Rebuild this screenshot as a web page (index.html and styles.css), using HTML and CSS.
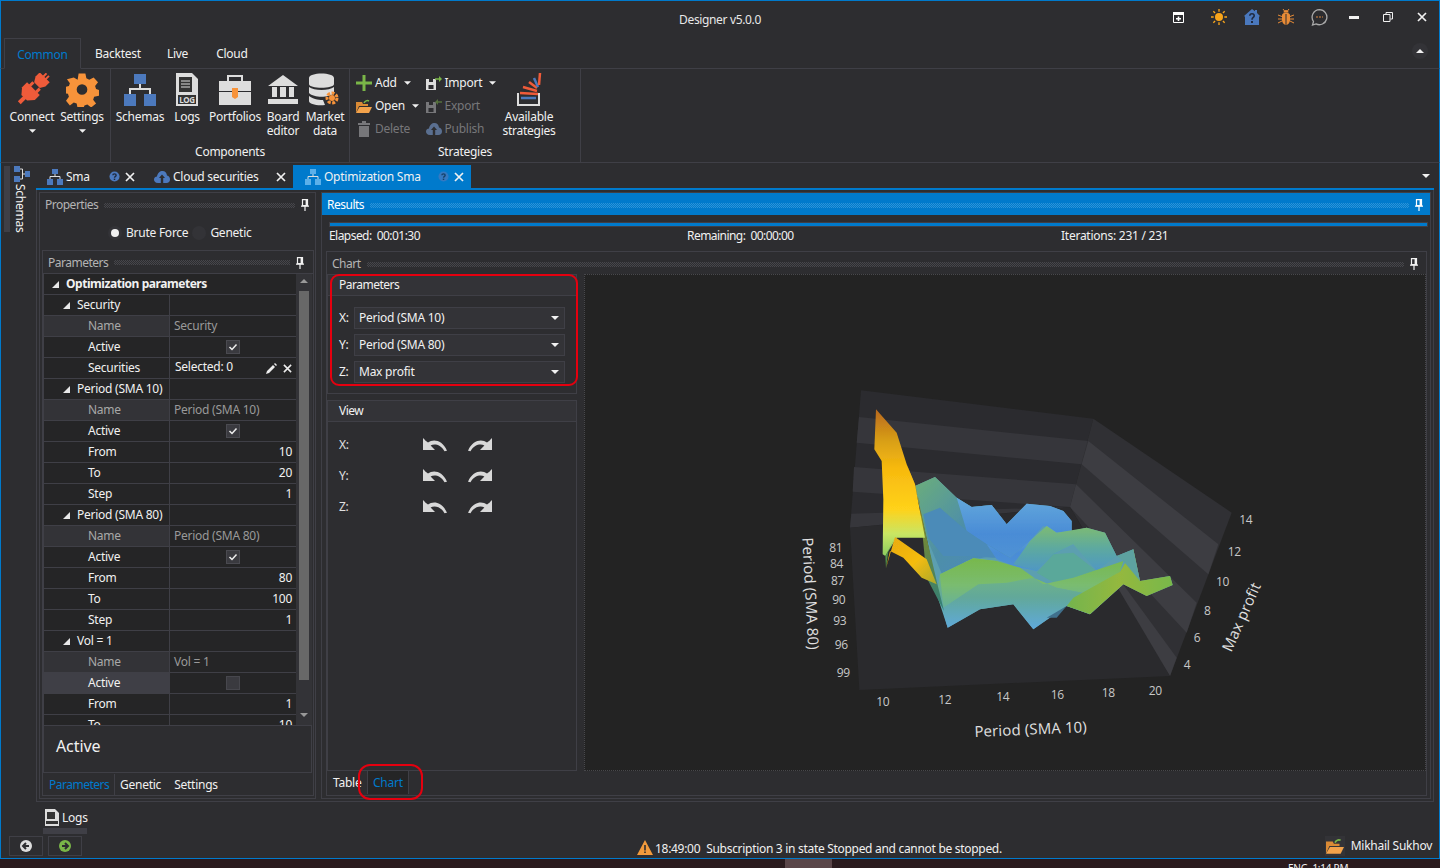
FILE: index.html
```html
<!DOCTYPE html>
<html lang="en">
<head>
<meta charset="utf-8">
<title>Designer v5.0.0</title>
<link rel="stylesheet" href="styles.css">
</head>
<body>
<svg class="defs" width="0" height="0" aria-hidden="true">
  <symbol id="schema" viewBox="0 0 16 16"><path fill="currentColor" d="M5 0h6v5H5zM0 10h6v6H0zM10 10h6v6h-6z"/><path fill="none" stroke="#ddd" d="M8 5v2.500M3 10V7.500h10V10"/></symbol>
  <symbol id="close" viewBox="0 0 10 10"><path stroke="currentColor" stroke-width="1.700" d="M1 1l8 8M9 1l-8 8"/></symbol>
  <symbol id="pin" viewBox="0 0 8 12"><path fill="none" stroke="currentColor" stroke-width="1.200" d="M1.500 .6h5v6h-5z"/><path fill="currentColor" d="M0 6.500h8v1.200H0zM3.400 7.500h1.200V12H3.400zM4.600 1h1.500v5.500H4.600z"/></symbol>
  <symbol id="help" viewBox="0 0 12 12"><circle cx="6" cy="6" r="5.500" fill="#4c79bd"/><path fill="none" stroke="#1f2a40" stroke-width="1.500" d="M4.200 4.600C4.200 2.600 7.800 2.600 7.800 4.600 7.800 5.900 6 5.800 6 7.400"/><path fill="#1f2a40" d="M5.200 8.300h1.600v1.500H5.200z"/></symbol>
  <symbol id="ccw" viewBox="0 0 24 14"><path fill="currentColor" d="M0 0l2 2 0 .2 3 2.400C10 1 19 1.500 24 12.800l-2.500 .4C17.500 6 11 5.500 7.600 7.500L12 12H0z"/></symbol>
  <symbol id="check" viewBox="0 0 14 14"><rect x=".5" y=".5" width="13" height="13" fill="#3a3a3f" stroke="#4a4a50"/><path fill="none" stroke="#eee" stroke-width="1.500" d="M3.500 7l2.500 2.500 4.500-5"/></symbol>
  <symbol id="cloud" viewBox="0 0 16 12"><path fill="currentColor" d="M4 12C1 12 0 10 0 8.500 0 6.500 1.500 5.500 3 5.500 3.500 2 6 0 8.500 0 11 0 12.800 2 13 4.500 15 5 16 6.500 16 8.500 16 10.500 14.500 12 12.500 12z"/><path fill="#2d2d30" d="M8 3.500l3 3.500H9.200v5H6.800V7H5z"/></symbol>
  <symbol id="tri" viewBox="0 0 8 4"><path fill="currentColor" d="M0 0h8L4 4z"/></symbol>
  <symbol id="triup" viewBox="0 0 8 4"><path fill="currentColor" d="M0 4h8L4 0z"/></symbol>
  <symbol id="tree" viewBox="0 0 7 7"><path fill="#e8e8e8" d="M7 0v7H0z"/></symbol>
</svg>

<div class="app">
  <header class="titlebar">
    <div class="title">Designer v5.0.0</div>
    <div class="winicons">
      <svg class="wi wi-first" width="11" height="11" viewBox="0 0 11 11"><path fill="none" stroke="#fff" d="M.5 .5h10v10H.5z"/><path fill="#fff" d="M0 0h11v3H0zM3 6h5v1.500H3z"/><path fill="#fff" d="M4.700 4.500h1.600v4.500H4.700z"/></svg>
      <svg class="wi wi-sun" width="16" height="16" viewBox="0 0 18 18"><circle cx="9" cy="9" r="4.500" fill="#f9a51a"/><path stroke="#f9a51a" stroke-width="1.500" d="M9 0v3M9 15v3M0 9h3M15 9h3M2.600 2.600l2 2M13.400 13.400l2 2M15.400 2.600l-2 2M4.600 13.400l-2 2"/></svg>
      <svg class="wi wi-home" width="16" height="16" viewBox="0 0 16 16"><path fill="#4a78bd" d="M8 0l3 2.300V1h2v3l3 3-1 .7V16H1V7.700L0 7z"/><path fill="none" stroke="#1f2a40" stroke-width="1.600" d="M5.800 6.800C5.800 4 10.200 4 10.200 6.800 10.200 8.600 8 8.400 8 10.800"/><path fill="#1f2a40" d="M7 12h2v2H7z"/></svg>
      <svg class="wi wi-bug" width="16" height="16" viewBox="0 0 16 16"><path fill="#e88b36" d="M4 6c0-1 1.500-2.500 4-2.500S12 5 12 6v5c0 2.500-2 5-4 5s-4-2.500-4-5z"/><path fill="#e88b36" d="M5.500 3.500a2.500 2.500 0 0 1 5 0z"/><path stroke="#e88b36" d="M5 0l1.500 2M11 0L9.500 2M0 6l4 1.500M16 6l-4 1.500M0 10h4M16 10h-4M0 14l4-2M16 14l-4-2"/><path stroke="#2d2d30" d="M8 5v11"/></svg>
      <svg class="wi wi-chat" width="17" height="17" viewBox="0 0 17 17"><path fill="none" stroke="#aaa" stroke-width="1.300" d="M8.500 .7a7.500 7.500 0 1 1-3.500 14.200L1.500 16l1-3.500A7.500 7.500 0 0 1 8.500 .7z"/><path stroke="#a0683a" stroke-width="1.500" stroke-dasharray="2 1" d="M5 8h7"/></svg>
      <svg class="wi wi-min" width="10" height="3" viewBox="0 0 10 3"><path fill="#f1f1f1" d="M0 0h10v3H0z"/></svg>
      <svg class="wi wi-max" width="10" height="10" viewBox="0 0 10 10"><path fill="none" stroke="#f1f1f1" d="M3 2.500V.5h6.500V7H7.500M.5 2.500H7V9.500H.5z"/></svg>
      <svg class="wi wi-x" width="10" height="10"><use href="#close"/></svg>
    </div>
  </header>

  <nav class="ribbon-tabs">
    <div class="rtab rtab-active">Common</div>
    <div class="rtab rtab-backtest">Backtest</div>
    <div class="rtab rtab-live">Live</div>
    <div class="rtab rtab-cloud">Cloud</div>
    <div class="collapse"><svg width="8" height="4"><use href="#triup"/></svg></div>
  </nav>

  <section class="ribbon">
    <div class="group group-a">
      <div class="btns">
        <div class="rb rb-connect">
          <svg class="big" width="36" height="34" viewBox="0 0 36 34"><g fill="#ef5b3a" transform="rotate(45 18 17)"><path d="M11 -1h14v6l-3 5h-8l-3-5z"/><path d="M15.500 -5h2v5h-2zM19 -5h2v5h-2z"/><path d="M9 15h18v7l-5 6h-8l-5-6z"/><path d="M12 10.500h3v5h-3zM21 10.500h3v5h-3z"/><path d="M16 27h4v8h-4z"/></g></svg>
          <span>Connect</span><svg class="drop" width="7" height="4"><use href="#tri"/></svg>
        </div>
        <div class="rb rb-settings">
          <svg class="big" width="33" height="33" viewBox="0 0 33 33"><path fill="#f7933a" fill-rule="evenodd" d="M13 0h7l1 5 3 1.500L28.500 4 33 9l-3 4 1 3 3 1v6l-5 1-1 3 3 4-5 4-4-3-3 1-1 3h-6l-1-5-3-1-4 3-4-5 3-4-1-3-4-1v-6l5-1 1-3-3-4L8 4l4 2.500zM16.500 11a5.500 5.500 0 1 0 0 11 5.500 5.500 0 0 0 0-11z" transform="scale(.97)"/></svg>
          <span>Settings</span><svg class="drop" width="7" height="4"><use href="#tri"/></svg>
        </div>
      </div>
    </div>
    <div class="group group-b">
      <div class="btns">
        <div class="rb rb-schemas"><svg class="big schema-c" width="32" height="34"><use href="#schema"/></svg><span>Schemas</span></div>
        <div class="rb rb-logs">
          <svg class="big" width="24" height="34" viewBox="0 0 24 34"><path fill="#ddd" d="M1 0h16l6 6v27H1z"/><path fill="#333" d="M4 4h13v15H4zM3 22h18v9H3z"/><path stroke="#ddd" d="M6 8h9M6 11h9M6 14h9"/><text x="12" y="30" class="log-t">LOG</text></svg>
          <span>Logs</span>
        </div>
        <div class="rb rb-portfolios">
          <svg class="big" width="34" height="32" viewBox="0 0 34 32"><path fill="none" stroke="#ddd" stroke-width="2" d="M10 7V2h14v5"/><path fill="#ddd" d="M1 7h32v10H1zM1 18h32v13H1z"/><path fill="#f7933a" d="M14 14h6v9l-3 2-3-2z"/></svg>
          <span>Portfolios</span>
        </div>
        <div class="rb rb-board">
          <svg class="big" width="32" height="32" viewBox="0 0 32 32"><path fill="#ddd" d="M16 1l15 11H1zM5 13h5v10H5zM13 13h6v10h-6zM22 13h5v10h-5zM1 25h30v5H1z"/></svg>
          <span>Board<br>editor</span>
        </div>
        <div class="rb rb-market">
          <svg class="big" width="32" height="34" viewBox="0 0 32 34"><path fill="#ddd" d="M0 5c0-6 25-6 25 0v6c0 5-25 5-25 0zM0 14c5 4 20 4 25 0v6c-5 5-20 5-25 0zM0 23c5 4 12 4 14 4l2 5C8 33 0 31 0 28z"/><circle cx="23" cy="25" r="5" fill="none" stroke="#f7933a" stroke-width="3" stroke-dasharray="3 1.500"/><circle cx="23" cy="25" r="3" fill="#f7933a"/></svg>
          <span>Market<br>data</span>
        </div>
      </div>
      <div class="gname">Components</div>
    </div>
    <div class="group group-c">
      <div class="btns">
        <div class="smallcols">
          <div class="smallcol">
            <div class="sb"><svg width="16" height="16" viewBox="0 0 16 16"><path fill="#7ab648" d="M6.500 0h3v6.500H16v3H9.500V16h-3V9.500H0v-3h6.500z"/></svg><span>Add</span><svg class="tri" width="7" height="4"><use href="#tri"/></svg></div>
            <div class="sb"><svg width="16" height="15" viewBox="0 0 16 15"><path fill="#d98a35" d="M0 3h6l1 2h5v2H3L0 14z"/><path fill="#f2a24b" d="M3.500 8H16l-3 6H0z"/><path fill="none" stroke="#7ab648" stroke-width="1.500" d="M8 4c1-2 3-3 5-2"/></svg><span>Open</span><svg class="tri" width="7" height="4"><use href="#tri"/></svg></div>
            <div class="sb sb-off"><svg width="16" height="16" viewBox="0 0 16 16"><path fill="#77777a" d="M2 2h12v2H2zM6 0h4v2H6zM3 5h10v11H3z"/></svg><span>Delete</span></div>
          </div>
          <div class="smallcol">
            <div class="sb"><svg width="16" height="14" viewBox="0 0 16 14"><path fill="#ddd" d="M0 3h10v11H0z"/><path fill="#2d2d30" d="M3 3h4v3H3zM2.500 9h5v4h-5z"/><path stroke="#7ab648" stroke-width="1.500" d="M9 3h5"/><path fill="#7ab648" d="M13 0l3 3-3 3z"/></svg><span>Import</span><svg class="tri" width="7" height="4"><use href="#tri"/></svg></div>
            <div class="sb sb-off"><svg width="16" height="14" viewBox="0 0 16 14"><path fill="#77777a" d="M0 3h10v11H0z"/><path fill="#2d2d30" d="M3 3h4v3H3zM2.500 9h5v4h-5z"/><path stroke="#55703c" stroke-width="1.500" d="M11 3h5"/><path fill="#55703c" d="M12 0L9 3l3 3z"/></svg><span>Export</span></div>
            <div class="sb sb-off"><svg class="pub" width="16" height="12"><use href="#cloud"/></svg><span>Publish</span></div>
          </div>
        </div>
        <div class="rb rb-avail">
          <svg class="big" width="26" height="34" viewBox="0 0 26 34"><path fill="none" stroke="#ddd" stroke-width="2" d="M2 20v12h21V20"/><path stroke="#ef5b3a" stroke-width="2.500" d="M4 20l18 1"/><path stroke="#4c79bd" stroke-width="2.500" d="M5 25h15"/><path stroke="#ef5b3a" stroke-width="2.500" d="M7 14l14 4M13 9l8 6"/><path stroke="#4c79bd" stroke-width="2.500" d="M18 5l4 9"/><path stroke="#ef5b3a" stroke-width="2.500" d="M24 0l-1 12"/></svg>
          <span>Available<br>strategies</span>
        </div>
      </div>
      <div class="gname gname-c">Strategies</div>
    </div>
  </section>

  <div class="workspace">
    <aside class="sidebar">
      <div class="side-strip"></div>
      <div class="side-content">
        <svg class="schema-c side-icon" width="16" height="16"><use href="#schema"/></svg>
        <div class="side-label">Schemas</div>
      </div>
    </aside>
    <main class="docs">
      <div class="doctabs">
        <div class="dtab dtab-sma"><svg class="schema-c" width="16" height="16"><use href="#schema"/></svg><span>Sma</span><svg class="h" width="11" height="11"><use href="#help"/></svg><svg class="x" width="10" height="10"><use href="#close"/></svg></div>
        <div class="dtab dtab-cloud"><svg class="cloud-c" width="16" height="12"><use href="#cloud"/></svg><span>Cloud securities</span><svg class="x" width="10" height="10"><use href="#close"/></svg></div>
        <div class="dtab dtab-opt"><svg class="opt-c" width="16" height="16"><use href="#schema"/></svg><span>Optimization Sma</span><svg class="h" width="11" height="11"><use href="#help"/></svg><svg class="x" width="10" height="10"><use href="#close"/></svg></div>
        <svg class="tabmenu" width="8" height="4"><use href="#tri"/></svg>
      </div>
      <div class="frame">
        <section class="left-pane">
          <div class="phead phead-l"><span>Properties</span><i class="dots"></i><svg width="8" height="12"><use href="#pin"/></svg></div>
          <div class="radios">
            <span class="radio radio-on"></span><span>Brute Force</span>
            <span class="radio"></span><span>Genetic</span>
          </div>
          <div class="params">
            <div class="phead phead-p"><span>Parameters</span><i class="dots"></i><svg width="8" height="12"><use href="#pin"/></svg></div>
            <div class="gridwrap">
              <div class="grid">
                <div class="row row-top"><div class="k k0"><svg width="7" height="7"><use href="#tree"/></svg><b>Optimization parameters</b></div></div>
                <div class="row"><div class="k k1"><svg width="7" height="7"><use href="#tree"/></svg>Security</div><div class="v"></div></div>
                <div class="row"><div class="k k2 dim">Name</div><div class="v muted">Security</div></div>
                <div class="row"><div class="k k2">Active</div><div class="v ctr"><svg width="14" height="14"><use href="#check"/></svg></div></div>
                <div class="row"><div class="k k2">Securities</div><div class="v sel"><span>Selected: 0</span><svg width="11" height="11" viewBox="0 0 11 11"><path fill="#eee" d="M0 11l1-3 6-6 2 2-6 6zM8 1l1-1 2 2-1 1z"/></svg><svg class="selx" width="9" height="9"><use href="#close"/></svg></div></div>
                <div class="row"><div class="k k1"><svg width="7" height="7"><use href="#tree"/></svg>Period (SMA 10)</div><div class="v"></div></div>
                <div class="row"><div class="k k2 dim">Name</div><div class="v muted">Period (SMA 10)</div></div>
                <div class="row"><div class="k k2">Active</div><div class="v ctr"><svg width="14" height="14"><use href="#check"/></svg></div></div>
                <div class="row"><div class="k k2">From</div><div class="v num">10</div></div>
                <div class="row"><div class="k k2">To</div><div class="v num">20</div></div>
                <div class="row"><div class="k k2">Step</div><div class="v num">1</div></div>
                <div class="row"><div class="k k1"><svg width="7" height="7"><use href="#tree"/></svg>Period (SMA 80)</div><div class="v"></div></div>
                <div class="row"><div class="k k2 dim">Name</div><div class="v muted">Period (SMA 80)</div></div>
                <div class="row"><div class="k k2">Active</div><div class="v ctr"><svg width="14" height="14"><use href="#check"/></svg></div></div>
                <div class="row"><div class="k k2">From</div><div class="v num">80</div></div>
                <div class="row"><div class="k k2">To</div><div class="v num">100</div></div>
                <div class="row"><div class="k k2">Step</div><div class="v num">1</div></div>
                <div class="row"><div class="k k1"><svg width="7" height="7"><use href="#tree"/></svg>Vol = 1</div><div class="v"></div></div>
                <div class="row"><div class="k k2 dim">Name</div><div class="v muted">Vol = 1</div></div>
                <div class="row"><div class="k k2 hot">Active</div><div class="v ctr"><span class="unchecked"></span></div></div>
                <div class="row"><div class="k k2">From</div><div class="v num">1</div></div>
                <div class="row"><div class="k k2">To</div><div class="v num">10</div></div>
              </div>
              <div class="scroll">
                <svg class="sup" width="8" height="4"><use href="#triup"/></svg>
                <div class="thumb"></div>
                <svg class="sdown" width="8" height="4"><use href="#tri"/></svg>
              </div>
            </div>
            <div class="desc">Active</div>
            <div class="ptabs">
              <div class="ptab ptab-on">Parameters</div><div class="ptab">Genetic</div><div class="ptab">Settings</div>
            </div>
          </div>
        </section>

        <section class="right-pane">
          <div class="rhead"><span>Results</span><i class="dots dots-b"></i><svg width="8" height="12"><use href="#pin"/></svg></div>
          <div class="progress"><div class="bar"></div></div>
          <div class="stats"><span class="s1">Elapsed:&nbsp; 00:01:30</span><span class="s2">Remaining:&nbsp; 00:00:00</span><span class="s3">Iterations: 231 / 231</span></div>
          <div class="chartpanel">
            <div class="phead phead-c"><span>Chart</span><i class="dots"></i><svg width="8" height="12"><use href="#pin"/></svg></div>
            <div class="chartbody">
              <div class="controls">
                <div class="gbox gbox-p">
                  <div class="gh">Parameters</div>
                  <div class="combos">
                    <div class="cline"><span class="ax">X:</span><div class="combo"><span>Period (SMA 10)</span><svg width="8" height="4"><use href="#tri"/></svg></div></div>
                    <div class="cline"><span class="ax">Y:</span><div class="combo"><span>Period (SMA 80)</span><svg width="8" height="4"><use href="#tri"/></svg></div></div>
                    <div class="cline"><span class="ax">Z:</span><div class="combo"><span>Max profit</span><svg width="8" height="4"><use href="#tri"/></svg></div></div>
                  </div>
                </div>
                <div class="gbox gbox-v">
                  <div class="gh">View</div>
                  <div class="views">
                    <div class="vline"><span>X:</span><svg width="24" height="14"><use href="#ccw"/></svg><svg class="flip" width="24" height="14"><use href="#ccw"/></svg></div>
                    <div class="vline"><span>Y:</span><svg width="24" height="14"><use href="#ccw"/></svg><svg class="flip" width="24" height="14"><use href="#ccw"/></svg></div>
                    <div class="vline"><span>Z:</span><svg width="24" height="14"><use href="#ccw"/></svg><svg class="flip" width="24" height="14"><use href="#ccw"/></svg></div>
                  </div>
                </div>
              </div>
              <div class="chart">
                <svg class="plot" width="500" height="370" viewBox="0 0 1500 1110">
                  <defs>
                    <linearGradient id="gSpike" x1="0" y1="0" x2="0" y2="1"><stop offset="0" stop-color="#b8681e"/><stop offset=".22" stop-color="#d9a016"/><stop offset=".4" stop-color="#f7b90f"/><stop offset=".68" stop-color="#ffd21a"/><stop offset=".85" stop-color="#c9e664"/><stop offset="1" stop-color="#8ccc60"/></linearGradient>
                    <linearGradient id="gSide" x1="0" y1="0" x2="0" y2="1"><stop offset="0" stop-color="#a96f18"/><stop offset=".5" stop-color="#7f8a2a"/><stop offset="1" stop-color="#2f7f7a"/></linearGradient>
                    <linearGradient id="gBlue" x1="0" y1="0" x2="0" y2="1"><stop offset="0" stop-color="#63a8dc"/><stop offset=".6" stop-color="#4a8cd6"/><stop offset="1" stop-color="#4f92d4"/></linearGradient>
                    <linearGradient id="gBack" x1="0" y1="0" x2="1" y2="1"><stop offset="0" stop-color="#6cae7a"/><stop offset=".5" stop-color="#4e8fa8"/><stop offset="1" stop-color="#4a87c0"/></linearGradient>
                    <linearGradient id="gMid" x1="0" y1="0" x2="0" y2="1"><stop offset="0" stop-color="#7dbb72"/><stop offset=".5" stop-color="#5da9a0"/><stop offset="1" stop-color="#4f97c4"/></linearGradient>
                    <linearGradient id="gFront" x1="0" y1="0" x2="0" y2="1"><stop offset="0" stop-color="#78b84c"/><stop offset=".55" stop-color="#7abc70"/><stop offset="1" stop-color="#66b09c"/></linearGradient>
                    <linearGradient id="gLow" x1="0" y1="0" x2="0" y2="1"><stop offset="0" stop-color="#7bbd75"/><stop offset=".55" stop-color="#62a89a"/><stop offset="1" stop-color="#5fa9dc"/></linearGradient>
                    <linearGradient id="gTail" x1="0" y1="0" x2="1" y2="0"><stop offset="0" stop-color="#74b44e"/><stop offset=".5" stop-color="#94b83e"/><stop offset="1" stop-color="#78b84a"/></linearGradient>
                    <linearGradient id="gWedge" x1="0" y1="0" x2="1" y2="1"><stop offset="0" stop-color="#e8a812"/><stop offset=".55" stop-color="#f5bc10"/><stop offset="1" stop-color="#a8a82c"/></linearGradient>
                    <filter id="soft" x="-5%" y="-5%" width="110%" height="110%"><feGaussianBlur stdDeviation="2"/></filter>
                  </defs>
                  <polygon class="wd" points="243,28 940,113 870,378 210,440"/>
                  <polygon class="wl" points="237,108 925,180 905,250 230,185"/>
                  <polygon class="wl" points="222,258 888,310 870,378 218,332"/>
                  <polygon class="wl" points="214,398 870,378 210,440"/>
                  <polygon class="rd" points="940,113 1355,395 1170,885 870,378"/>
                  <polygon class="rl" points="925,180 1315,490 1285,580 905,250"/>
                  <polygon class="rl" points="888,310 1250,665 1220,755 870,378"/>
                  <polygon class="rl" points="1000,570 1190,830 1170,885 970,590"/>
                  <polygon class="fl" points="210,440 870,378 1170,885 238,927"/>
                  <g filter="url(#soft)">
                    <polygon fill="#5c9fb0" points="405,315 465,288 530,350 575,378 635,372 680,430 740,368 810,375 850,390 875,420 875,450 920,440 975,455 1010,525 1060,505 1080,600 1170,585 1178,612 1100,645 1030,610 930,700 860,675 760,745 700,670 600,685 503,740 470,620 440,470"/>
                    <polygon fill="url(#gBack)" points="405,315 465,288 530,350 575,378 635,372 680,430 660,520 560,540 490,590 440,470"/>
                    <polygon fill="url(#gBlue)" points="530,350 575,378 635,372 680,430 740,368 810,375 850,390 875,420 875,450 830,455 790,435 750,480 690,530 620,490 560,450"/>
                    <polygon fill="#4b8bb8" points="430,400 480,380 560,450 620,490 690,530 640,530 560,525 490,525 445,470"/>
                    <polygon fill="url(#gBlue)" points="620,490 690,530 750,480 800,435 830,455 880,450 880,490 820,520 770,570 700,555 650,535"/>
                    <polygon fill="url(#gMid)" points="750,480 800,435 830,455 920,440 975,455 1010,525 950,570 880,490 820,520 770,570 700,550"/>
                    <polygon fill="#5aa89a" points="820,520 880,515 950,570 1030,540 960,580 830,610 770,575"/>
                    <polygon fill="url(#gLow)" points="480,580 580,532 650,540 760,590 830,620 930,640 1000,600 1030,610 930,700 860,675 760,745 700,670 600,685 503,740 470,640"/>
                    <polygon fill="url(#gFront)" points="480,580 580,532 650,540 720,560 790,610 880,590 1030,540 1020,572 930,640 830,620 760,590 680,605 595,610 490,680"/>
                    <polygon fill="#3f6f8c" points="800,710 860,675 830,710"/>
                    <polygon fill="url(#gTail)" points="880,650 1020,572 1060,505 1080,600 1170,585 1178,612 1100,645 1030,610 930,700 860,675"/>
                    <polygon fill="#5da2a0" points="1010,525 1060,505 1080,600 1030,540"/>
                    <polygon fill="url(#gSide)" points="350,155 380,250 405,310 440,470 470,600 492,690 440,590 418,360 380,250"/>
                    <polygon fill="url(#gSpike)" points="288,85 350,155 380,250 405,310 418,380 435,470 350,470 316,525 308,520 310,355 305,240 283,205"/>
                    <polygon fill="#4f8f48" points="316,525 345,470 325,510 318,562"/>
                    <polygon fill="url(#gWedge)" points="345,468 440,535 470,610 425,590 370,530 330,510 318,562"/>
                  </g>
                  <g class="tick">
                    <text x="148" y="513">81</text><text x="150" y="560">84</text><text x="153" y="611">87</text><text x="157" y="668">90</text><text x="160" y="732">93</text><text x="164" y="805">96</text><text x="170" y="887">99</text>
                    <text x="289" y="975">10</text><text x="475" y="968">12</text><text x="649" y="960">14</text><text x="812" y="953">16</text><text x="965" y="947">18</text><text x="1106" y="941">20</text>
                    <text x="1378" y="429">14</text><text x="1343" y="525">12</text><text x="1308" y="615">10</text><text x="1272" y="701">8</text><text x="1241" y="784">6</text><text x="1211" y="863">4</text>
                  </g>
                  <text class="axt" transform="translate(67 470) rotate(87)">Period (SMA 80)</text>
                  <text class="axt" transform="translate(584 1068) rotate(-2.500)">Period (SMA 10)</text>
                  <text class="axt" transform="translate(1354 815) rotate(-66)">Max profit</text>
                </svg>
              </div>
            </div>
            <div class="btabs"><div class="btab">Table</div><div class="btab btab-on">Chart</div></div>
            <div class="ring ring-p"></div>
            <div class="ring ring-c"></div>
          </div>
        </section>
      </div>
    </main>
  </div>

  <footer class="footer">
    <div class="foot-left">
      <div class="logs"><svg width="14" height="17" viewBox="0 0 14 17"><path fill="#ddd" d="M0 0h10l4 4v13H0z"/><path fill="#333" d="M2 3h8v7H2zM1 12h12v3H1z"/></svg><span>Logs</span></div>
      <div class="logbar"></div>
      <div class="navs">
        <div class="nav"><svg width="12" height="12" viewBox="0 0 12 12"><circle cx="6" cy="6" r="6" fill="#ddd"/><path stroke="#2d2d30" stroke-width="2" fill="none" d="M9 6H3.500M6 3L3 6l3 3"/></svg></div>
        <div class="nav"><svg width="12" height="12" viewBox="0 0 12 12"><circle cx="6" cy="6" r="6" fill="#7ab648"/><path stroke="#2d2d30" stroke-width="2" fill="none" d="M3 6h5.500M6 3l3 3-3 3"/></svg></div>
      </div>
    </div>
    <div class="status"><svg class="warn" width="16" height="15" viewBox="0 0 16 15"><path fill="#f29a3c" d="M8 0l8 15H0z"/><path fill="#2d2d30" d="M7.200 5h1.600v5.500H7.200zM7.200 11.500h1.600V13H7.200z"/></svg><span class="st">18:49:00</span><span>Subscription 3 in state Stopped and cannot be stopped.</span></div>
    <div class="user"><span class="uicon"><svg width="18" height="17" viewBox="0 0 16 15"><path fill="#d98a35" d="M0 3h6l1 2h5v2H3L0 14z"/><path fill="#f2a24b" d="M3.500 8H16l-3 6H0z"/><path fill="none" stroke="#7ab648" stroke-width="1.500" d="M8 4c1-2 3-3 5-2"/></svg></span><span>Mikhail Sukhov</span></div>
  </footer>

  <div class="desktop"><i class="dk-key"></i><span class="dk-clock">ENG &nbsp;1:14 PM</span></div>
</div>
</body>
</html>
```

FILE: styles.css
```css
* { box-sizing: border-box; }
html, body { margin: 0; height: 100%; }
body { background: #2d2d30; color: #f1f1f1; font: 12px/16px "Noto Sans", "Open Sans", sans-serif; letter-spacing: -.25px; overflow: hidden; }
.defs { position: absolute; }
svg { display: block; flex: none; }
i { display: block; }

.app { width: 1440px; height: 868px; display: flex; flex-direction: column; overflow: hidden; }

.titlebar { height: 38px; flex: none; position: relative; display: flex; align-items: center; border-top: 1px solid #007acc; border-left: 1px solid #007acc; border-right: 1px solid #007acc; padding-bottom: 5px; }
.title { position: absolute; left: 0; right: 0; text-align: center; top: 11px; color: #e8e8e8; letter-spacing: -.35px; }
.winicons { margin-left: auto; display: flex; align-items: center; height: 100%; padding-right: 12px; }
.wi-first { margin-right: 27px; }
.wi-sun { margin-right: 17px; }
.wi-home { margin-right: 18px; }
.wi-bug { margin-right: 17px; }
.wi-chat { margin-right: 21px; }
.wi-min { margin-right: 24px; }
.wi-max { margin-right: 24px; }

.ribbon-tabs { height: 31px; flex: none; display: flex; align-items: stretch; padding-left: 3px; border-left: 1px solid #007acc; border-right: 1px solid #007acc; border-bottom: 1px solid #3f3f46; position: relative; }
.rtab { line-height: 32px; color: #f1f1f1; }
.rtab-active { width: 77px; text-align: center; color: #007acc; border: 1px solid #3f3f46; border-bottom: 1px solid #2d2d30; height: 31px; }
.rtab-backtest { margin-left: 14px; }
.rtab-live { margin-left: 26px; }
.rtab-cloud { margin-left: 28px; }
.collapse { position: absolute; right: 11px; top: 5px; width: 16px; height: 16px; border-radius: 50%; background: #333337; display: flex; align-items: center; justify-content: center; color: #f1f1f1; }

.ribbon { height: 94px; flex: none; display: flex; border-left: 1px solid #007acc; border-right: 1px solid #007acc; border-bottom: 1px solid #3f3f46; }
.group { display: flex; flex-direction: column; border-right: 1px solid #3f3f46; position: relative; }
.group-a { width: 110px; padding-left: 8px; }
.group-b { width: 239px; padding-left: 5px; }
.group-c { width: 231px; }
.btns { display: flex; height: 76px; flex: none; padding-top: 4px; }
.rb { display: flex; flex-direction: column; align-items: center; text-align: center; line-height: 14px; color: #f1f1f1; }
.rb .big { height: 34px; margin-bottom: 3px; }
.rb .drop { margin-top: 5px; }
.rb-connect { width: 46px; }
.rb-settings { width: 46px; margin-left: 4px; }
.rb-schemas { width: 48px; }
.rb-logs { width: 28px; margin-left: 9px; }
.rb-portfolios { width: 52px; margin-left: 8px; }
.rb-board { width: 34px; margin-left: 5px; }
.rb-market { width: 38px; margin-left: 6px; }
.rb-avail { width: 56px; margin-left: 6px; }
.schema-c { color: #4c79bd; }
.log-t { font: 700 8px "Noto Sans", sans-serif; fill: #ddd; text-anchor: middle; }
.gname { position: absolute; bottom: 2px; left: 0; right: 0; text-align: center; color: #f1f1f1; }
.smallcols { display: flex; margin-left: 6px; margin-top: 2px; }
.smallcol { display: flex; flex-direction: column; gap: 7px; width: 69.500px; }
.sb { display: flex; align-items: center; height: 16px; gap: 3px; color: #f1f1f1; }
.sb .tri { margin-left: 4px; }
.sb-off { color: #77777a; }
.pub { color: #5a6f90; }

.workspace { flex: 1; min-height: 0; display: flex; border-left: 1px solid #007acc; border-right: 1px solid #007acc; padding-right: 5px; }
.sidebar { width: 35px; flex: none; display: flex; padding-top: 3px; padding-left: 3px; }
.side-strip { width: 6px; height: 66px; background: #3f3f46; }
.side-content { margin-left: 3px; display: flex; flex-direction: column; align-items: center; width: 18px; }
.side-icon { transform: rotate(90deg); }
.side-label { writing-mode: vertical-rl; margin-top: 2px; margin-left: -4px; }

.docs { flex: 1; min-width: 0; display: flex; flex-direction: column; }
.doctabs { height: 27px; flex: none; display: flex; align-items: stretch; padding-top: 2px; padding-left: 11px; border-bottom: 2px solid #007acc; position: relative; }
.dtab { display: flex; align-items: center; gap: 3px; white-space: nowrap; }
.dtab span { margin-top: 1px; }
.dtab .x { color: #f1f1f1; }
.dtab-sma { width: 107px; }
.dtab-sma .h { margin-left: 16px; }
.dtab-sma .x { margin-left: 2px; }
.dtab-cloud { width: 139px; }
.cloud-c { color: #4c79bd; }
.dtab-cloud .x { margin-left: 14px; }
.dtab-opt { width: 178px; background: #007acc; padding-left: 12px; }
.opt-c { color: #5bb0ea; }
.dtab-opt .h { margin-left: 14px; opacity: .7; }
.dtab-opt .x { margin-left: 2px; }
.tabmenu { position: absolute; right: 4px; top: 11px; color: #f1f1f1; }

.frame { flex: 1; min-height: 0; display: flex; gap: 5px; padding: 2px; border: 1px solid #3f3f46; border-top: 0; }
.left-pane { width: 277px; flex: none; display: flex; flex-direction: column; border: 1px solid #3f3f46; padding: 1px 1px 2px; }
.phead { height: 22px; flex: none; display: flex; align-items: center; padding: 0 5px; color: #b4b4b4; gap: 6px; letter-spacing: -.5px; }
.phead-l { padding-left: 4px; }
.phead svg { color: #f1f1f1; }
.dots { flex: 1; height: 5px; background-image: repeating-conic-gradient(#47474c 0 25%, transparent 0 50%); background-size: 2px 2px; }
.radios { height: 34px; flex: none; display: flex; align-items: center; padding-left: 67px; gap: 4px; }
.radio { width: 14px; height: 14px; border-radius: 50%; background: #333337; display: flex; align-items: center; justify-content: center; }
.radio-on::before { content: ""; width: 8px; height: 8px; border-radius: 50%; background: #f1f1f1; }

.params { flex: 1; min-height: 0; display: flex; flex-direction: column; border: 1px solid #3f3f46; margin-left: 1px; }
.phead-p { height: 23px; border-bottom: 1px solid #3f3f46; padding-left: 5px; padding-right: 9px; padding-top: 1px; }
.gridwrap { height: 452px; flex: none; display: flex; border-bottom: 1px solid #3f3f46; margin-right: 1px; overflow: hidden; }
.grid { width: 253px; flex: none; overflow: hidden; background: #252526; border-left: 1px solid #3f3f46; }
.row { height: 21px; display: grid; grid-template-columns: 126px 1fr; border-bottom: 1px solid #3f3f46; line-height: 20px; }
.row-top { grid-template-columns: 1fr; }
.row-top b { letter-spacing: -.45px; }
.k { display: flex; align-items: center; border-right: 1px solid #3f3f46; white-space: nowrap; }
.row-top .k { border-right: 0; }
.k svg { margin-right: 7px; }
.k0 { padding-left: 8px; }
.k1 { padding-left: 19px; }
.k2 { padding-left: 44px; }
.dim { background: #333337; color: #a8a8a8; }
.hot { background: #3f3f46; }
.v { padding: 0 4px; }
.muted { color: #999; }
.num { text-align: right; }
.ctr { display: flex; align-items: center; justify-content: center; padding-right: 4px; }
.unchecked { width: 14px; height: 14px; background: #3a3a3f; border: 1px solid #47474d; }
.sel { display: flex; align-items: center; padding-left: 5px; padding-right: 4px; }
.sel span { flex: 1; margin-top: -3px; }
.selx { margin-left: 6px; color: #eee; }
.scroll { flex: 1; background: #333337; display: flex; flex-direction: column; align-items: center; padding-top: 5px; padding-bottom: 8px; color: #999; }
.thumb { width: 10px; height: 389px; background: #686868; margin-top: 8px; }
.sdown { margin-top: auto; }
.desc { height: 47px; flex: none; padding: 9px 12px; font-size: 16px; line-height: 22px; letter-spacing: -.1px; border-bottom: 1px solid #3f3f46; border-left: 1px solid #3f3f46; border-right: 1px solid #3f3f46; margin-right: 1px; }
.ptabs { flex: 1; display: flex; align-items: stretch; line-height: 21px; margin-top: 1px; }
.ptab { padding: 0 7px 0 5px; }
.ptab + .ptab + .ptab { padding-left: 6px; }
.ptab-on { width: 72px; color: #007acc; background: #2d2d30; border-right: 1px solid #3f3f46; padding: 0 0 0 6px; letter-spacing: -.5px; }

.right-pane { flex: 1; min-width: 0; display: flex; flex-direction: column; border: 1px solid #3f3f46; }
.rhead { height: 22px; flex: none; display: flex; align-items: center; padding: 2px 7px 0 5px; background: #007acc; gap: 6px; color: #fff; letter-spacing: -.5px; }
.dots-b { background-image: repeating-conic-gradient(#2d94d8 0 25%, transparent 0 50%); }
.progress { height: 5px; flex: none; margin: 7px 2px 0 7px; border: 1px solid #3f3f46; }
.bar { height: 100%; background: #007acc; }
.stats { height: 17px; flex: none; display: flex; padding-left: 7px; line-height: 17px; }
.s1 { width: 358px; letter-spacing: -.55px; }
.s2 { width: 374px; letter-spacing: -.55px; }
.chartpanel { flex: 1; min-height: 0; display: flex; flex-direction: column; margin: 7px 3px 2px 4px; border: 1px solid #3f3f46; position: relative; }
.phead-c { color: #b4b4b4; padding-right: 8px; padding-top: 2px; }
.chartbody { flex: 1; min-height: 0; display: flex; gap: 7px; }
.controls { width: 250px; flex: none; display: flex; flex-direction: column; gap: 6px; }
.gbox { border: 1px solid #3f3f46; }
.gbox-p { height: 120px; }
.gbox-v { flex: 1; }
.gh { height: 21px; line-height: 20px; padding-left: 11px; background: #333337; border-bottom: 1px solid #3f3f46; letter-spacing: -.5px; }
.combos { display: flex; flex-direction: column; gap: 5px; padding: 11px 11px 0 11px; }
.cline { display: flex; align-items: center; gap: 5px; }
.ax { width: 10px; }
.combo { flex: 1; height: 22px; background: #333337; border: 1px solid #3f3f46; display: flex; align-items: center; justify-content: space-between; padding: 0 5px 0 4px; }
.views { padding: 15px 0 0 11px; display: flex; flex-direction: column; gap: 15px; }
.vline { display: flex; align-items: center; height: 16px; color: #e0e0e0; }
.vline span { width: 84px; }
.vline svg { color: #d8d8d8; margin-right: 21px; }
.flip { transform: scaleX(-1); }
.chart { flex: 1; min-width: 0; background: #232323; border: 1px dotted #48484c; padding: 106px 0 0 195px; overflow: hidden; }
.wd { fill: #2b2b2f; }
.wl { fill: #36363b; }
.rd { fill: #303034; }
.rl { fill: #3d3d42; }
.fl { fill: #2a2a2d; }
.tick text { font: 36px "Open Sans", sans-serif; fill: #c8c8c8; letter-spacing: -1px; }
.axt { font: 45px "Open Sans", sans-serif; fill: #e0e0e0; letter-spacing: .4px; }
.btabs { height: 24px; flex: none; display: flex; align-items: stretch; line-height: 24px; padding-left: 6px; }
.btab { width: 34px; white-space: nowrap; }
.btab-on { color: #007acc; background: #252526; width: 42px; padding: 0 5px; border-right: 1px solid #3f3f46; border-left: 1px solid #3f3f46; height: 23px; }
.ring { position: absolute; border: 2px solid #e5000f; border-radius: 9px; }
.ring-p { left: 3px; top: 22px; width: 248px; height: 112px; }
.ring-c { left: 31px; bottom: -5px; width: 65px; height: 36px; border-radius: 12px; }

.footer { height: 57px; flex: none; display: grid; grid-template-columns: 636px 1fr auto; align-items: end; border-left: 1px solid #007acc; border-right: 1px solid #007acc; border-bottom: 1px solid #007acc; padding-bottom: 2px; }
.foot-left { padding-left: 8px; }
.logs { display: flex; align-items: center; gap: 3px; margin-left: 36px; height: 19px; }
.logbar { width: 44px; height: 6px; background: #3f3f46; margin: 1px 0 2px 34px; }
.navs { display: flex; gap: 5px; }
.nav { width: 34px; height: 20px; border: 1px solid #3f3f46; display: flex; align-items: center; justify-content: center; }
.status { display: flex; align-items: center; gap: 2px; margin-bottom: -1px; letter-spacing: -.3px; }
.warn { margin-top: -3px; }
.st { margin-right: 4px; }
.user { display: flex; align-items: center; gap: 6px; padding-right: 7px; }
.uicon { width: 20px; height: 20px; background: #333337; display: flex; align-items: center; justify-content: center; }

.desktop { height: 9px; flex: none; background: #2a1b1e; overflow: hidden; display: flex; }
.dk-key { width: 47px; height: 9px; background: #5a4649; margin-left: 785px; }
.dk-clock { margin-left: 456px; margin-top: 4px; line-height: 10px; font-size: 10px; color: #f1f1f1; white-space: nowrap; }
```
